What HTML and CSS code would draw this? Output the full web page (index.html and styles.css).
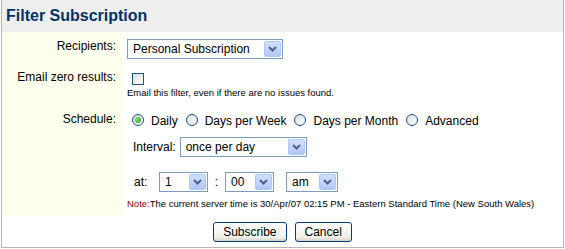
FILE: index.html
```html
<!DOCTYPE html>
<html lang="en">
<head>
  <meta charset="UTF-8">
  <title>Filter Subscription</title>
  <link rel="stylesheet" href="styles.css">
</head>
<body>
  <div class="panel">
    <div class="panel-header">
      <h1>Filter Subscription</h1>
    </div>

    <form class="form-grid" onsubmit="return false">
      <div class="field-label row-recipients">Recipients:</div>
      <div class="field row-recipients">
        <span class="select-box">
          <select class="w-recipients">
            <option>Personal Subscription</option>
          </select>
          <span class="select-arrow"><svg width="9" height="6" viewBox="0 0 9 6"><path d="M1 1 L4.5 4.5 L8 1" fill="none" stroke="#4d6185" stroke-width="2"/></svg></span>
        </span>
      </div>

      <div class="field-label row-email">Email zero results:</div>
      <div class="field row-email">
        <input type="checkbox" class="check">
        <div class="hint">Email this filter, even if there are no issues found.</div>
      </div>

      <div class="field-label row-schedule">Schedule:</div>
      <div class="field row-schedule">
        <div class="radio-line">
          <label class="radio-option"><input type="radio" name="sched" checked>Daily</label>
          <label class="radio-option"><input type="radio" name="sched">Days per Week</label>
          <label class="radio-option"><input type="radio" name="sched">Days per Month</label>
          <label class="radio-option"><input type="radio" name="sched">Advanced</label>
        </div>

        <div class="interval-line">
          <span class="interval-label">Interval:</span>
          <span class="select-box">
            <select class="w-interval">
              <option>once per day</option>
            </select>
            <span class="select-arrow"><svg width="9" height="6" viewBox="0 0 9 6"><path d="M1 1 L4.5 4.5 L8 1" fill="none" stroke="#4d6185" stroke-width="2"/></svg></span>
          </span>
        </div>

        <div class="time-line">
          <span class="time-label">at:</span>
          <span class="select-box">
            <select class="w-time"><option>1</option></select>
            <span class="select-arrow"><svg width="9" height="6" viewBox="0 0 9 6"><path d="M1 1 L4.5 4.5 L8 1" fill="none" stroke="#4d6185" stroke-width="2"/></svg></span>
          </span>
          <span class="time-sep">:</span>
          <span class="select-box">
            <select class="w-time"><option>00</option></select>
            <span class="select-arrow"><svg width="9" height="6" viewBox="0 0 9 6"><path d="M1 1 L4.5 4.5 L8 1" fill="none" stroke="#4d6185" stroke-width="2"/></svg></span>
          </span>
          <span class="select-box ampm">
            <select class="w-ampm"><option>am</option></select>
            <span class="select-arrow"><svg width="9" height="6" viewBox="0 0 9 6"><path d="M1 1 L4.5 4.5 L8 1" fill="none" stroke="#4d6185" stroke-width="2"/></svg></span>
          </span>
        </div>

        <div class="note"><span class="note-title">Note:</span>The current server time is 30/Apr/07 02:15 PM - Eastern Standard Time (New South Wales)</div>
      </div>
    </form>

    <div class="buttons">
      <button class="btn">Subscribe</button>
      <button class="btn">Cancel</button>
    </div>
  </div>
</body>
</html>
```

FILE: styles.css
```css
body {
  margin: 0;
  font-family: "Liberation Sans", Arial, sans-serif;
  font-size: 12px;
  color: #000;
  background: #fff;
}
.panel {
  margin-left: 1px;
  width: 561px;
  border: 1px solid #b5b5b5;
  border-top: none;
}
.panel-header {
  background-color: #eeeeee;
  height: 32px;
  padding-left: 4px;
}
.panel-header h1 {
  margin: 0;
  font-size: 16px;
  line-height: 32px;
  color: #003366;
}

.form-grid {
  display: grid;
  grid-template-columns: 120px 1fr;
}
.field-label {
  background-color: #ffffee;
  text-align: right;
  padding-right: 6px;
  line-height: 14px;
}
.field {
  padding-left: 5px;
}
.field-label.row-recipients { padding-top: 7px; }
.field.row-recipients { padding-top: 7px; padding-bottom: 5px; }
.field-label.row-email { padding-top: 6px; }
.field.row-email { padding-top: 9px; }
.field-label.row-schedule { padding-top: 13px; }
.field.row-schedule { padding-top: 15px; padding-bottom: 6px; }

/* selects */
.select-box {
  position: relative;
  display: inline-block;
  vertical-align: middle;
}
.select-box select {
  -webkit-appearance: none;
  appearance: none;
  height: 20px;
  margin: 0;
  padding: 0 22px 0 5px;
  border: 1px solid #7f9db9;
  border-radius: 0;
  background: #fff;
  font-family: "Liberation Sans", Arial, sans-serif;
  font-size: 12px;
  color: #000;
  display: block;
}
.select-arrow {
  position: absolute;
  top: 2px;
  right: 2px;
  width: 15px;
  height: 14px;
  border: 1px solid #b0c6f5;
  border-radius: 2px;
  background: linear-gradient(#d2e0fd, #b0c6f6);
  display: flex;
  align-items: center;
  justify-content: center;
  pointer-events: none;
}
.w-recipients { width: 156px; }
.w-interval { width: 127px; }
.w-time { width: 49px; }
.w-ampm { width: 52px; }

/* checkbox */
.check {
  -webkit-appearance: none;
  appearance: none;
  display: block;
  width: 12px;
  height: 12px;
  margin: 0 0 0 5px;
  border: 1px solid #1c5180;
  background: linear-gradient(135deg, #dcdcd7, #fff);
}
.hint {
  margin-top: 2px;
  font-size: 9.5px;
  line-height: 12px;
}

/* radios */
.radio-line {
  display: flex;
  padding-left: 5px;
  height: 14px;
  line-height: 14px;
}
.radio-option {
  display: inline-flex;
  align-items: center;
  margin-right: 8px;
}
.radio-option input {
  -webkit-appearance: none;
  appearance: none;
  width: 12px;
  height: 12px;
  margin: 0 7px 2px 0;
  border: 1px solid #1c5180;
  border-radius: 50%;
  background: linear-gradient(135deg, #dcdcd7, #fff);
  display: flex;
  align-items: center;
  justify-content: center;
}
.radio-option input:checked::after {
  content: "";
  width: 6px;
  height: 6px;
  border-radius: 50%;
  background: radial-gradient(circle at 35% 35%, #7be07b, #21a121);
}

.interval-line {
  margin-top: 9px;
  padding-left: 6px;
  display: flex;
  align-items: center;
}
.interval-label {
  margin-right: 4px;
}
.time-line {
  margin-top: 15px;
  padding-left: 7px;
  display: flex;
  align-items: center;
}
.time-label {
  width: 25px;
}
.time-sep {
  width: 17px;
  text-align: center;
}
.ampm {
  margin-left: 12px;
}
.note {
  margin-top: 6px;
  font-size: 9.5px;
  line-height: 12px;
}
.note-title {
  color: #990000;
}

/* buttons */
.buttons {
  display: flex;
  justify-content: center;
  gap: 8px;
  padding: 6px 0 5px;
}
.btn {
  height: 20px;
  padding: 0 9px;
  border: 1px solid #003c74;
  border-radius: 3px;
  background: linear-gradient(#ffffff, #f0f0ea 80%, #d6d0c5);
  font-family: "Liberation Sans", Arial, sans-serif;
  font-size: 12px;
  color: #000;
}
```
